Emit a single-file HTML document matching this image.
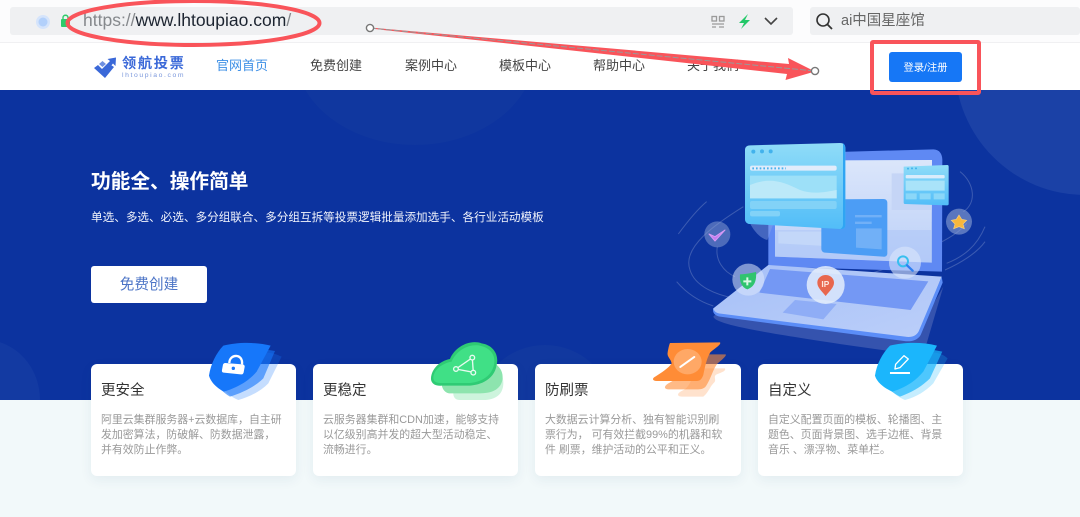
<!DOCTYPE html>
<html><head><meta charset="utf-8">
<style>
html,body{margin:0;padding:0;width:1080px;height:517px;overflow:hidden;background:#fff}
body{position:relative;font-family:"Liberation Sans","Noto Sans CJK SC",sans-serif}
.a{position:absolute;white-space:nowrap}
.nav{top:57px;font-size:13px;line-height:18px;color:#444}
.card{position:absolute;top:364px;width:205px;height:112px;background:#fff;border-radius:6px;box-shadow:0 4px 12px rgba(30,70,120,.07)}
.card h3{position:absolute;left:10px;top:17px;margin:0;font-size:14.5px;line-height:20px;font-weight:400;color:#333}
.card p{position:absolute;left:10px;top:49px;margin:0;font-size:10.9px;line-height:15px;color:#999;white-space:nowrap}
svg{position:absolute;left:0;top:0}
</style></head><body>
<div class="a" style="left:0;top:0;width:1080px;height:42px;background:#fcfcfd"></div>
<div class="a" style="left:10px;top:7px;width:783px;height:28px;background:#eff0f2;border-radius:3px"></div>
<div class="a" style="left:810px;top:7px;width:270px;height:28px;background:#eff0f2;border-radius:3px"></div>
<div class="a" style="left:83px;top:9px;font-size:17.5px;line-height:22px;color:#1c2430"><span style="color:#85888c">https://</span>www.lhtoupiao.com<span style="color:#85888c">/</span></div>
<div class="a" style="left:841px;top:12px;font-size:14.5px;line-height:19px;color:#666">ai中国星座馆</div>

<div class="a" style="left:0;top:42px;width:1080px;height:48px;background:#fff;border-top:1px solid #f0f0f2;box-sizing:border-box"></div>
<div class="a" style="left:122px;top:56px;font-size:14.2px;line-height:17px;font-weight:700;letter-spacing:1.7px;color:#3a68d8">领航投票</div>
<div class="a" style="left:122px;top:71px;font-size:6.8px;line-height:9px;letter-spacing:1.6px;color:#7c98dc">lhtoupiao.com</div>
<div class="a nav" style="left:216px;color:#3d8fe6">官网首页</div>
<div class="a nav" style="left:310px">免费创建</div>
<div class="a nav" style="left:405px">案例中心</div>
<div class="a nav" style="left:499px">模板中心</div>
<div class="a nav" style="left:593px">帮助中心</div>
<div class="a nav" style="left:687px">关于我们</div>
<div class="a" style="left:889px;top:52px;width:73px;height:30px;background:#1677f6;border-radius:3px;color:#fff;font-size:10.3px;line-height:33px;text-align:center">登录/注册</div>

<div class="a" style="left:0;top:90px;width:1080px;height:310px;background:#0c339f;overflow:hidden">
  <div class="a" style="left:295px;top:-130px;width:240px;height:185px;border-radius:50%;background:#10379f"></div>
  <div class="a" style="left:955px;top:-155px;width:260px;height:260px;border-radius:50%;background:#1b41a6"></div>
  <div class="a" style="left:-70px;top:250px;width:110px;height:120px;border-radius:50%;background:#133aa2"></div>
  <div class="a" style="left:480px;top:255px;width:130px;height:120px;border-radius:50%;background:#11389f"></div>
</div>
<div class="a" style="left:0;top:400px;width:1080px;height:117px;background:#f2f9fa"></div>

<div class="a" style="left:91px;top:170px;font-size:19.7px;line-height:25px;font-weight:700;color:#fff">功能全、操作简单</div>
<div class="a" style="left:91px;top:209px;font-size:11.62px;line-height:17px;color:#f0f3fb">单选、多选、必选、多分组联合、多分组互拆等投票逻辑批量添加选手、各行业活动模板</div>
<div class="a" style="left:91px;top:266px;width:116px;height:37px;background:#fff;border-radius:3px;color:#4c74c6;font-size:14.6px;line-height:39px;text-align:center">免费创建</div>

<svg width="340" height="230" viewBox="0 0 1020 690" style="left:660px;top:130px">
  <defs>
    <linearGradient id="lg1" x1="0" y1="0" x2="0" y2="1"><stop offset="0" stop-color="#8fdcf8"/><stop offset="1" stop-color="#52bdf8"/></linearGradient>
    <linearGradient id="lg2" x1="0" y1="0" x2="1" y2="1"><stop offset="0" stop-color="#a6c0f8"/><stop offset="1" stop-color="#bccff9"/></linearGradient>
    <linearGradient id="lg3" x1="0" y1="0" x2="0" y2="1"><stop offset="0" stop-color="#dbe6fa"/><stop offset="1" stop-color="#bcd0f8"/></linearGradient>
  </defs>
  <g fill="none" stroke="#fff" stroke-opacity=".2" stroke-width="3">
    <path d="M250 230C170 280 65 350 90 420C105 470 170 495 225 505"/>
    <path d="M140 215C110 240 75 285 55 312M50 455C80 490 120 515 160 528"/>
    <path d="M172 350C165 390 190 425 225 440"/>
    <path d="M900 125C945 160 950 220 910 245M815 350C860 330 900 305 920 280M860 400C910 380 950 350 975 290M855 420C900 400 950 370 975 335"/>
    <path d="M540 455C600 440 660 425 700 405"/>
  </g>
  <path d="M160 560C165 585 330 610 560 645L750 672L800 640L850 470L770 610L170 550Z" fill="#3553ae"/>
  <path d="M325 402V110C325 88 335 72 360 71L820 58C838 58 847 72 847 90L846 425L325 410Z" fill="#5f89f3"/>
  <path d="M345 92L816 90L815 398L345 380Z" fill="url(#lg3)"/>
  <path d="M345 300L816 300V398L345 380Z" fill="#a9c3f8" opacity=".5"/>
  <path d="M695 130H815V240H695Z" fill="#c5d5f6"/>
  <path d="M355 305H572V352L355 340Z" fill="#c3d7f9"/>
  <path d="M484 220C484 212 490 208 498 208L670 207C678 207 682 212 682 218V370C682 378 676 381 668 380L495 368C488 368 484 362 484 356Z" fill="#4c9df5"/>
  <path d="M585 255H665V262H585ZM585 275H635V282H585ZM588 295H665V358L588 353Z" fill="#7ab5f7" opacity=".8"/>
  <path d="M160 535L325 405L845 440L778 610C770 628 752 634 732 630L178 552C165 550 156 542 160 535Z" fill="url(#lg2)"/>
  <path d="M160 535C163 546 170 549 182 551L735 620C755 623 768 618 776 604L845 440L848 458L782 615C772 632 752 636 732 633L180 560C166 558 156 548 160 535Z" fill="#5b8df7"/>
  <path d="M330 417L805 454L752 540L298 488Z" fill="#7498f4"/>
  <path d="M405 510L530 522L490 568L368 548Z" fill="#8fadf6"/>
  <path d="M270 280L340 282L322 330C300 325 280 300 270 280Z" fill="#8aa5e6" opacity=".45"/>
  <path d="M255 60C255 50 262 46 270 46L540 39C550 39 556 44 556 54V285C556 294 550 298 541 297L270 282C262 282 255 276 255 268Z" fill="url(#lg1)"/>
  <path d="M549 40C552 41 556 46 556 54V285C556 294 550 298 541 297C547 294 549 290 549 282Z" fill="#2fa5f3"/>
  <circle cx="280" cy="65" r="6" fill="#42b2ec"/><circle cx="306" cy="64" r="6" fill="#42b2ec"/><circle cx="332" cy="64" r="6" fill="#42b2ec"/>
  <rect x="270" y="107" width="260" height="15" rx="6" fill="#e1ecfb"/>
  <path d="M277 115H378" stroke="#49b2ee" stroke-width="6" stroke-dasharray="5 6" fill="none"/>
  <path d="M270 137H530V205H270Z" fill="#9de0f8"/>
  <path d="M270 165C330 140 370 155 420 180C460 195 500 185 530 180V205H270Z" fill="#bce9f9"/>
  <rect x="270" y="213" width="260" height="24" rx="6" fill="#82d2f7"/>
  <rect x="270" y="243" width="90" height="16" rx="6" fill="#82d2f7"/>
  <path d="M731 110L862 105C865 105 866 107 866 110V222C866 225 864 226 861 226L735 222C732 222 731 220 731 217Z" fill="url(#lg1)"/>
  <circle cx="744" cy="116" r="3" fill="#42b2ec"/><circle cx="756" cy="115" r="3" fill="#42b2ec"/><circle cx="768" cy="115" r="3" fill="#42b2ec"/>
  <rect x="737" y="135" width="117" height="10" rx="3" fill="#d9ecfb"/>
  <path d="M737 152H854V182H737Z" fill="#a9e3f9"/>
  <path d="M737 190H770V208H737ZM779 190H812V208H779ZM821 190H854V208H821Z" fill="#8bd7f8"/>
  <circle cx="172" cy="313" r="39" fill="#8da3d6" opacity=".5"/>
  <path d="M147 312L165 333L195 300L165 320Z" fill="#c47cf0" stroke="#d79af5" stroke-width="3" stroke-linejoin="round"/>
  <circle cx="265" cy="449" r="48" fill="#dbe6fb" opacity=".55"/>
  <path d="M240 433C255 433 272 430 288 426C290 450 285 470 262 478C245 472 238 455 240 433Z" fill="#2fc46f"/>
  <path d="M262 442V466M250 454H274" stroke="#d9f8e5" stroke-width="6"/>
  <circle cx="497" cy="465" r="57" fill="#e4edfc" opacity=".85"/>
  <path d="M497 498C482 480 472 472 472 458C472 444 484 435 497 435C510 435 522 444 522 458C522 472 510 482 497 498Z" fill="#e8674e"/>
  <text x="496" y="471" font-size="25" font-weight="700" fill="#fde5dd" text-anchor="middle" font-family="Liberation Sans,sans-serif">IP</text>
  <circle cx="735" cy="398" r="48" fill="#dbe6fb" opacity=".6"/>
  <circle cx="729" cy="394" r="15" fill="none" stroke="#38bfef" stroke-width="6"/>
  <path d="M741 406L758 422" stroke="#2f7ff2" stroke-width="7" stroke-linecap="round"/>
  <circle cx="897" cy="275" r="39" fill="#8da3d6" opacity=".6"/>
  <path d="M897 255L905 268L920 271L909 282L913 296L897 290L881 296L885 282L874 271L889 268Z" fill="#f7b73c" stroke="#f9cf7d" stroke-width="2"/>
</svg>

<div class="card" style="left:91px"><h3>更安全</h3><p>阿里云集群服务器+云数据库，自主研<br>发加密算法，防破解、防数据泄露，<br>并有效防止作弊。</p></div>
<div class="card" style="left:313px"><h3>更稳定</h3><p>云服务器集群和CDN加速，能够支持<br>以亿级别高并发的超大型活动稳定、<br>流畅进行。</p></div>
<div class="card" style="left:535px;width:206px"><h3>防刷票</h3><p>大数据云计算分析、独有智能识别刷<br>票行为， 可有效拦截99%的机器和软<br>件 刷票，维护活动的公平和正义。</p></div>
<div class="card" style="left:758px"><h3>自定义</h3><p>自定义配置页面的模板、轮播图、主<br>题色、页面背景图、选手边框、背景<br>音乐 、漂浮物、菜单栏。</p></div>

<svg width="1080" height="517" viewBox="0 0 1080 517">
  <!-- logo -->
  <path d="M94 68L98 65L105 72L111 65L114 67L105 78Z" fill="#3a68d8"/>
  <path d="M100 71L110 61L107.5 59L116 57.5L115.5 66L113 63.5L104 74Z" fill="#3a68d8"/>
  <path d="M99 64L102.5 61L106 64L102.5 67Z" fill="#6f90e0"/>
  <!-- shield -->
  <g transform="translate(80,335) scale(.3333)">
    <path d="M465 62L545 52C575 52 590 58 605 65L565 145C540 170 510 185 475 195C450 185 430 165 420 150C425 120 440 90 465 62Z" fill="#1677fa" opacity=".25"/>
    <path d="M445 48C480 40 530 38 585 48L550 130C525 155 490 172 450 185C425 170 408 150 402 135C410 100 425 70 445 48Z" fill="#1677fa" opacity=".6"/>
    <path d="M430 32C470 22 525 20 572 32L530 110C505 140 470 158 432 170C408 158 392 140 387 122C392 88 408 55 430 32Z" fill="#1677fa"/>
    <path d="M436 84L488 88C493 89 495 92 494 96L491 112C490 117 486 119 482 118L431 113C427 112 425 110 426 105L429 89C430 86 432 84 436 84Z" fill="#fff"/>
    <path d="M448 84C448 56 490 54 486 88" fill="none" stroke="#fff" stroke-width="7"/>
    <circle cx="460" cy="100" r="5" fill="#1677fa"/>
  </g>
  <!-- cloud -->
  <g transform="translate(80,335) scale(.3333)">
    <path d="M1120 175C1120 140 1150 110 1190 100C1230 85 1270 105 1270 140C1272 175 1250 195 1210 195H1140C1128 195 1120 188 1120 175Z" fill="#cdf4dd"/>
    <path d="M1085 145C1085 110 1120 90 1160 78C1200 60 1268 80 1268 125C1268 160 1240 175 1200 175H1110C1095 175 1085 160 1085 145Z" fill="#8de4ae"/>
    <path d="M1053 130C1055 100 1080 78 1110 72C1125 35 1170 12 1205 25C1240 30 1258 60 1250 90C1245 125 1215 148 1170 152H1085C1065 154 1053 145 1053 130Z" fill="#2fcb74"/>
    <path d="M1060 128C1062 104 1085 86 1115 80C1130 44 1172 24 1203 33C1235 40 1248 65 1242 90C1235 120 1210 140 1170 144H1085C1070 145 1060 140 1060 128Z" fill="#40e086"/>
    <path d="M1177 68L1128 102L1180 112Z" fill="none" stroke="#e8fbf0" stroke-width="4"/>
    <g fill="#40e086" stroke="#e8fbf0" stroke-width="4"><circle cx="1177" cy="68" r="7"/><circle cx="1128" cy="102" r="7"/><circle cx="1180" cy="113" r="7"/></g>
  </g>
  <!-- ticket -->
  <g transform="translate(525,335) scale(.3333)">
    <path d="M510 100H600C604 108 590 112 575 118C562 125 578 135 565 145C555 155 552 170 535 185H470C455 184 456 175 470 168C490 160 500 140 510 100Z" fill="#ff8c36" opacity=".25"/>
    <path d="M480 58H602C606 62 590 75 578 85C565 100 560 125 545 150C540 160 530 163 520 163H430C415 162 418 152 430 145C450 135 470 120 478 105C470 90 468 72 480 58Z" fill="#ff8c36" opacity=".6"/>
    <path d="M435 24L585 22C590 28 572 38 556 52C545 70 540 95 535 120C530 133 525 138 515 138H395C382 137 380 130 392 124C410 112 430 100 440 85C438 72 425 65 428 52C430 42 432 30 435 24Z" fill="#ff8c36"/>
    <ellipse cx="488" cy="80" rx="42" ry="38" fill="#ffa866"/>
    <path d="M466 96L508 66" stroke="#fff" stroke-width="6" stroke-linecap="round"/>
  </g>
  <!-- cyan shield -->
  <g transform="translate(525,335) scale(.3333)">
    <path d="M1135 62L1215 52C1240 52 1255 58 1268 70L1225 145C1200 170 1175 185 1140 195C1115 185 1095 165 1085 150C1090 120 1105 90 1135 62Z" fill="#1bb6fc" opacity=".25"/>
    <path d="M1115 48C1150 40 1200 38 1252 50L1215 130C1190 155 1160 172 1125 185C1095 170 1078 150 1072 135C1080 100 1095 70 1115 48Z" fill="#1bb6fc" opacity=".7"/>
    <path d="M1095 32C1135 22 1190 20 1236 32L1195 110C1170 140 1140 158 1102 170C1075 158 1055 140 1050 122C1055 88 1072 55 1095 32Z" fill="#1bb6fc"/>
    <path d="M1110 102L1112 88L1137 62L1150 72L1125 98Z" fill="none" stroke="#fff" stroke-width="4" stroke-linejoin="round"/>
    <path d="M1095 114H1155" stroke="#fff" stroke-width="6"/>
  </g>
  <!-- address bar icons -->
  <circle cx="43" cy="22" r="7" fill="#d5e4fb"/><circle cx="43" cy="22" r="4.5" fill="#b2d0fb"/>
  <rect x="61" y="19" width="9" height="8" rx="1" fill="#2ecb6a"/>
  <path d="M63 19.5V17.5C63 14.5 68 14.5 68 17.5V19.5" fill="none" stroke="#2ecb6a" stroke-width="1.4"/>
  <g fill="none" stroke="#9a9a9a" stroke-width="1.3"><rect x="712" y="16.5" width="4.5" height="4.5"/><rect x="719.5" y="16.5" width="4.5" height="4.5"/><path d="M712 24H724M712 27H716M719 27H724"/></g>
  <path d="M748 14L739 23H744L741 29L750 20H745Z" fill="#22c868"/>
  <path d="M765 18L771 24L777 18" fill="none" stroke="#444" stroke-width="1.6"/>
  <circle cx="823" cy="20" r="6" fill="none" stroke="#333" stroke-width="1.6"/>
  <path d="M827.5 24.5L832 29" stroke="#333" stroke-width="1.8"/>
  <!-- annotations -->
  <ellipse cx="193.5" cy="23" rx="126" ry="22" fill="none" stroke="#f9545a" stroke-width="4"/>
  <rect x="872" y="42" width="107" height="51" fill="none" stroke="#f9545a" stroke-width="4" rx="1"/>
  <path d="M370 27.5L789 64L788 58L815 71.5L785.5 80L787 74L370 28.5Z" fill="#f9545a"/>
  <path d="M370 28L815 71" stroke="#999" stroke-width="1" stroke-dasharray="6 2"/>
  <circle cx="370" cy="28" r="3.6" fill="#fff" stroke="#777" stroke-width="1.4"/>
  <circle cx="815" cy="71" r="3.6" fill="#fff" stroke="#777" stroke-width="1.4"/>
</svg>
</body></html>
